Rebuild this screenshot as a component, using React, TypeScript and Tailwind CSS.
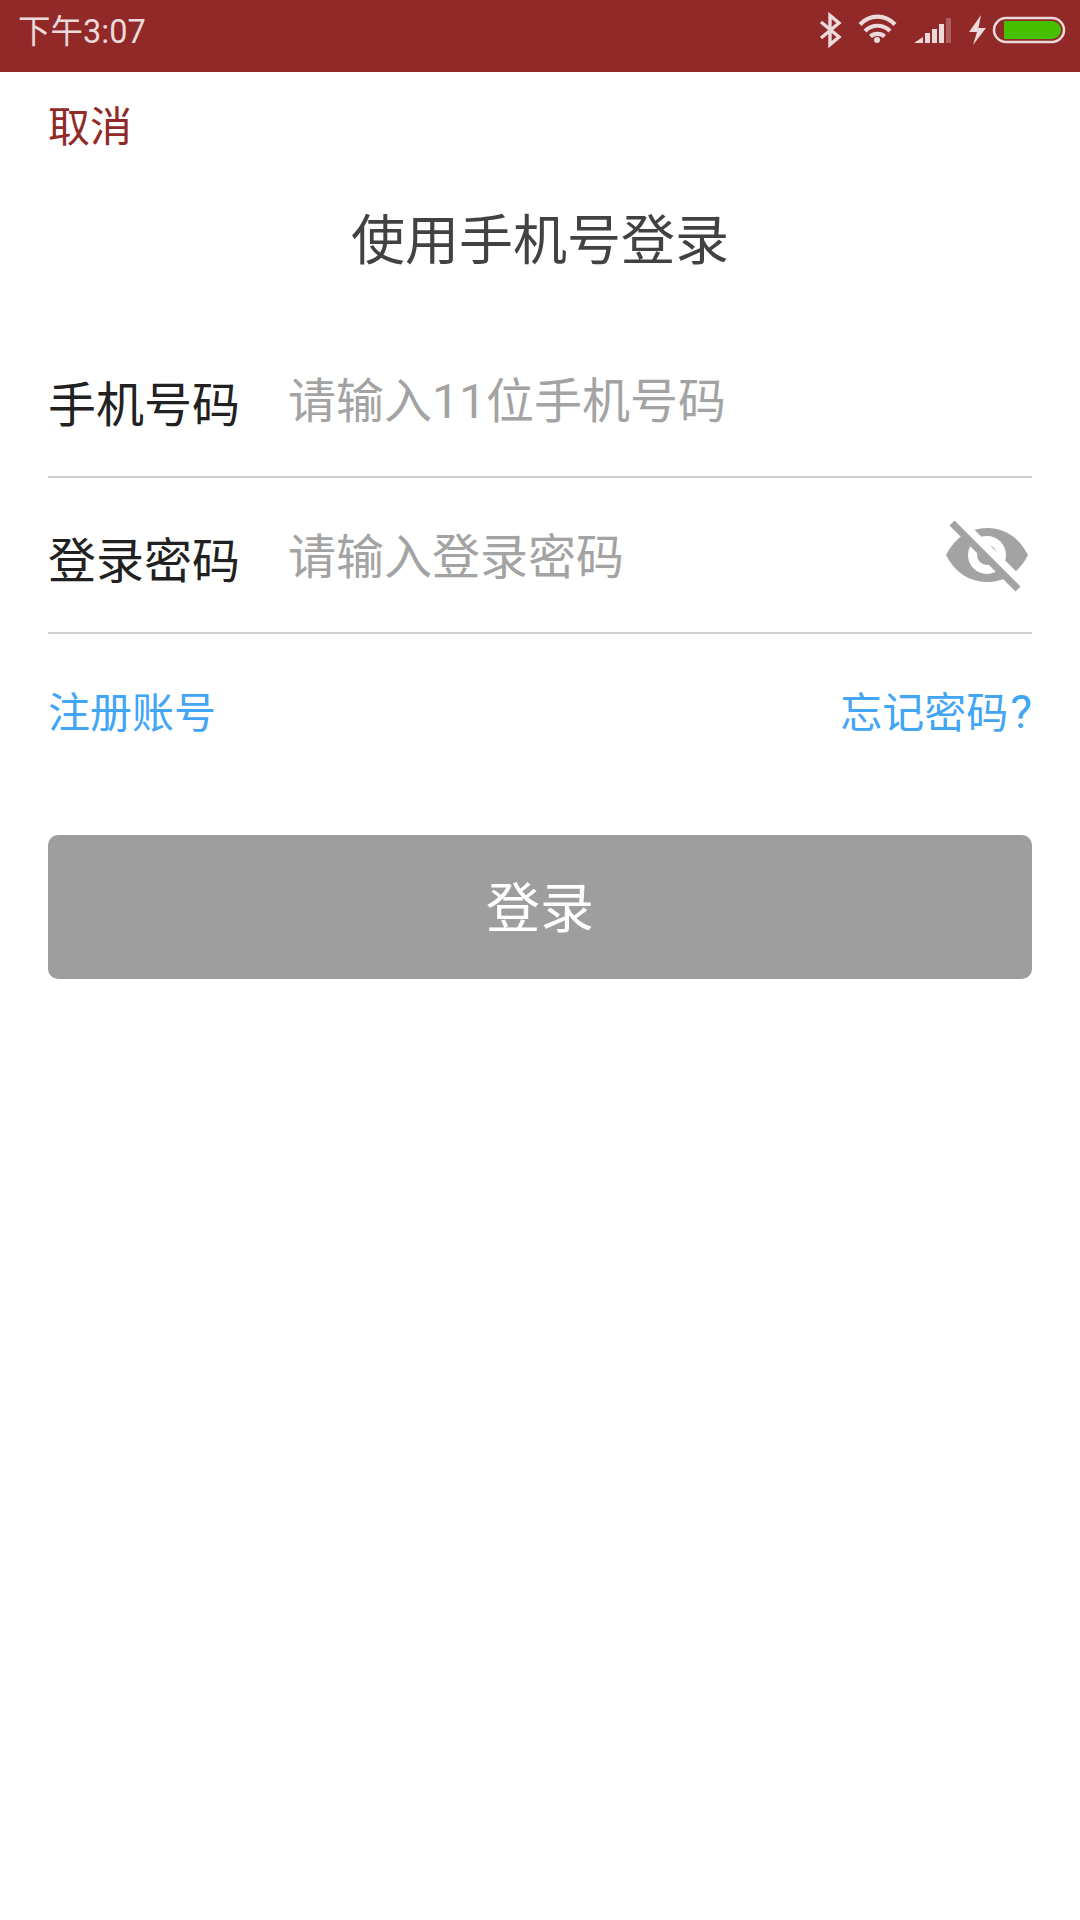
const font = { fontFamily: 'Roboto, "Noto Sans CJK SC", sans-serif' };

function StatusIcons() {
  return (
    <svg width="300" height="72" viewBox="0 0 300 72" className="shrink-0">
      {/* bluetooth */}
      <path d="M41 22 L59 37 L50 44.500 V15.500 L59 23 L41 38" fill="none" stroke="#ecd9d9" strokeWidth="3.4" />
      {/* wifi */}
      <g fill="none" stroke="#ecd9d9" strokeWidth="4.2">
        <path d="M80 24.5 C90 14 105 14 115 24.5" />
        <path d="M85 31 C92 24 103 24 110 31" />
        <path d="M90.5 36.5 C94 33 101 33 104.500 36.500" />
      </g>
      <circle cx="97" cy="40" r="3" fill="#ecd9d9" />
      {/* signal */}
      <path d="M134 43 L143 37 V43 Z" fill="#ecd9d9" />
      <rect x="145" y="33" width="5" height="10" fill="#ecd9d9" />
      <rect x="152" y="29" width="5" height="14" fill="#ecd9d9" />
      <rect x="159" y="24" width="5" height="19" fill="#ecd9d9" />
      <rect x="166" y="18" width="5" height="25" fill="#ecd9d9" opacity="0.3" />
      {/* charging bolt */}
      <path d="M201 15 L189 32 H197 L193 45 L206 28 H198.500 Z" fill="#ecd9d9" />
      {/* battery */}
      <rect x="214" y="18" width="70" height="24" rx="12" fill="none" stroke="#ecd9d9" strokeWidth="2.500" />
      <path d="M224 21 H272 A9 9 0 0 1 272 39 H224 Z" fill="#46c000" />
    </svg>
  );
}

function EyeOff() {
  return (
    <svg width="84" height="72" viewBox="0 0 84 72" className="shrink-0 mr-[3px] mt-[2px]">
      <path
        fillRule="evenodd"
        d="M1 35 C10 17 25 8 42 8 C59 8 74 17 83 35 C74 53 59 62 42 62 C25 62 10 53 1 35 Z M42 16 A19 19 0 1 0 42 54 A19 19 0 1 0 42 16 Z"
        fill="#a3a3a3"
      />
      <circle cx="42" cy="35" r="10" fill="#a3a3a3" />
      {/* white gap on the upper right of the slash only */}
      <path d="M12 -2 L79 65" stroke="#ffffff" strokeWidth="8" />
      <path d="M7 3 L73 69" stroke="#a3a3a3" strokeWidth="7" />
    </svg>
  );
}

export default function App() {
  return (
    <div className="w-[1080px] h-[1920px] bg-white flex flex-col" style={font}>
      <div className="h-[72px] bg-[#912929] flex items-center justify-between pl-[18px]">
        <span className="text-[32.5px] text-[#ecd9d9] leading-[40px] mb-[9px]">下午3:07</span>
        <StatusIcons />
      </div>
      <div className="px-12 flex flex-col">
        <div className="pt-[32px] text-[42px] leading-[48px] text-[#912929]">取消</div>
        <h1 className="mt-[54px] text-center text-[54px] leading-[72px] font-normal text-[#424242]">使用手机号登录</h1>
        <div className="mt-[44px] h-[156px] flex items-center border-b-2 border-[#cfcfcf]">
          <span className="w-[240px] text-[48px] leading-[64px] mt-[14px] text-[#212121]">手机号码</span>
          <span className="text-[48px] leading-[64px] mt-[5px] text-[#a3a3a3]">请输入11位手机号码</span>
        </div>
        <div className="h-[156px] flex items-center justify-between border-b-2 border-[#cfcfcf]">
          <div className="flex items-center">
            <span className="w-[240px] text-[48px] leading-[64px] mt-[14px] text-[#212121]">登录密码</span>
            <span className="text-[48px] leading-[64px] mt-[5px] text-[#a3a3a3]">请输入登录密码</span>
          </div>
          <EyeOff />
        </div>
        <div className="mt-[52px] h-[56px] flex justify-between text-[42px] leading-[56px] text-[#42a5f5]">
          <span>注册账号</span>
          <span>
            忘记密码<span className="ml-[2px] text-[46px] leading-none">?</span>
          </span>
        </div>
        <button className="mt-[93px] h-[144px] pt-[4px] rounded-[10px] bg-[#9e9e9e] text-white text-[54px]">登录</button>
      </div>
    </div>
  );
}
